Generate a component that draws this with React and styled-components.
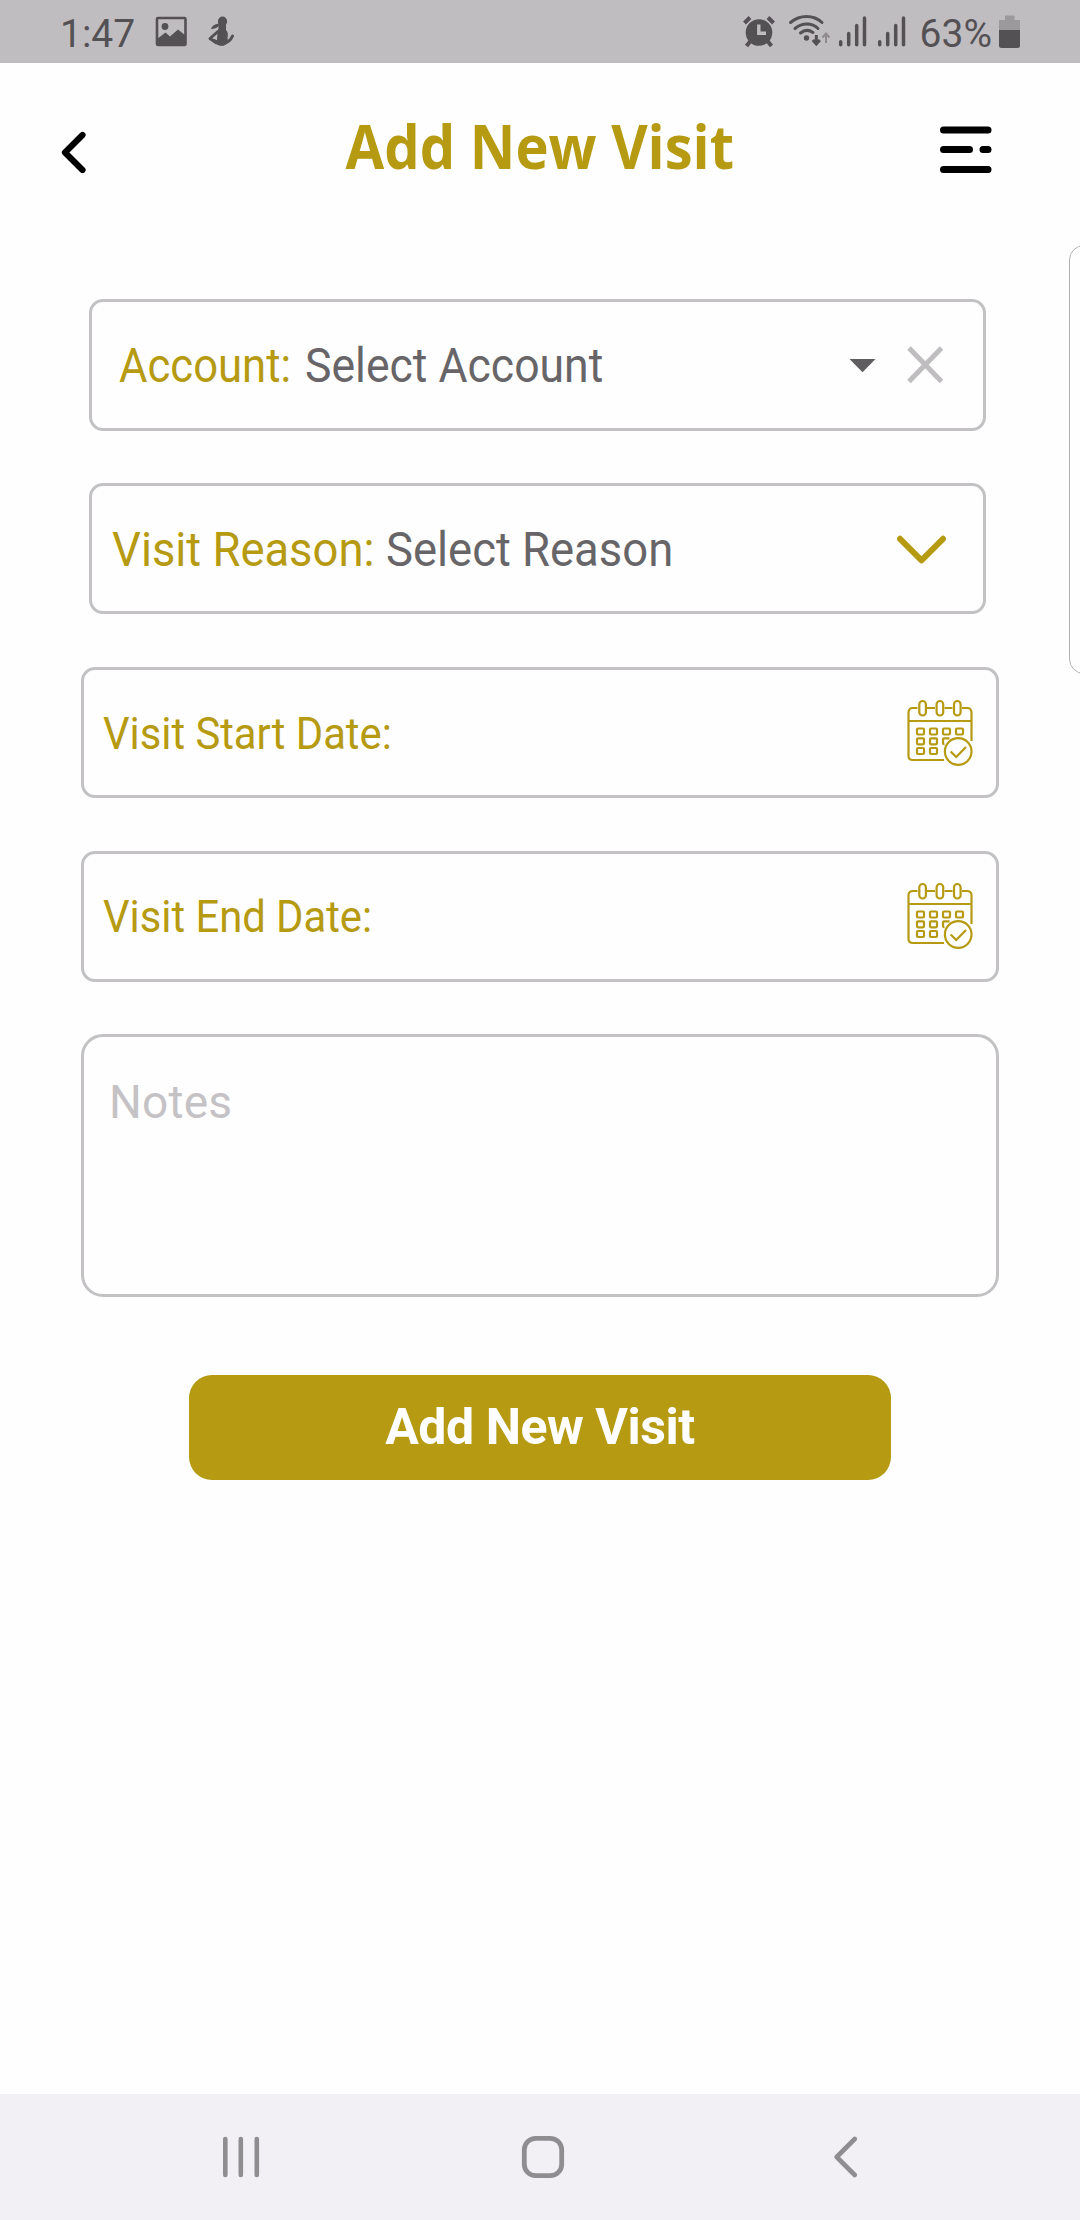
import React from "react";
import styled, { createGlobalStyle, ThemeProvider } from "styled-components";

const theme = {
  gold: "#b59a12",
  border: "#c3c1c4",
  value: "#676568",
  status: "#545155",
  nav: "#8f8d90",
};

/*
 * Styles
 */

const GlobalStyle = createGlobalStyle`
  * {
    box-sizing: border-box;
  }
  body {
    margin: 0;
    background: #fefefe;
    font-family: Roboto, "Open Sans", sans-serif;
  }
  svg {
    display: block;
    flex-shrink: 0;
  }
`;

const Screen = styled.div`
  position: relative;
  display: flex;
  flex-direction: column;
  width: 1080px;
  height: 2220px;
  overflow: hidden;
  background: #fefefe;
`;

const StatusBar = styled.div`
  display: flex;
  justify-content: space-between;
  height: 63px;
  padding: 0 59px 0 60px;
  background: #c0bdc0;
  color: ${({ theme }) => theme.status};
`;

const StatusGroup = styled.div`
  display: flex;
  align-items: flex-start;
`;

const StatusGap = styled.span`
  width: 11px;
`;

const SignalGroup = styled.span`
  display: flex;
  margin: 0 4px 0 7px;
`;

const StatusText = styled.span`
  font-size: 39px;
  line-height: 68px;
  white-space: nowrap;
  margin-right: ${({ $gap }) => $gap}px;
`;

const Header = styled.header`
  display: flex;
  justify-content: space-between;
  align-items: flex-start;
  height: 236px;
  padding: 50px 86px 0 59px;
`;

const Title = styled.h1`
  margin: 0 0 0 52px;
  color: ${({ theme }) => theme.gold};
  font-family: "Open Sans", sans-serif;
  font-size: 60px;
  font-weight: 700;
  line-height: 67px;
  transform: scaleX(0.935);
`;

const IconButton = styled.button`
  display: flex;
  padding: 0;
  border: 0;
  background: none;
  color: #000000;
  margin-top: ${({ $top }) => $top || 0}px;
`;

const Form = styled.form`
  display: flex;
  flex: 1;
  flex-direction: column;
  gap: 52.5px;
  padding: 0.4px 81px 0;
`;

const Field = styled.div`
  display: flex;
  align-items: center;
  height: 131.25px;
  border: 3px solid ${({ theme }) => theme.border};
  border-radius: 14px;
`;

const SelectField = styled(Field)`
  margin: 0 13px 0 8px;
  padding-left: ${({ $inset }) => $inset}px;
`;

const DateField = styled(Field)`
  padding: 0 22px 0 19px;
`;

// condensed lettering, narrowed from the left edge
const Label = styled.span`
  color: ${({ theme }) => theme.gold};
  font-size: ${({ $size }) => $size || 48}px;
  line-height: 60px;
  padding-top: 2px;
  transform: scaleX(${({ $narrow }) => $narrow});
  transform-origin: left center;
  white-space: nowrap;
`;

const Value = styled(Label)`
  flex: 1;
  margin-left: ${({ $gap }) => $gap}px;
  color: ${({ theme }) => theme.value};
`;

const DateLabel = styled(Label)`
  flex: 1;
`;

const Notes = styled.textarea`
  height: 263px;
  padding: 35px 25px;
  border: 3px solid ${({ theme }) => theme.border};
  border-radius: 22px;
  background: none;
  font-family: inherit;
  font-size: 46px;
  line-height: 60px;
  letter-spacing: 0.2px;
  resize: none;
  outline: none;
  &::placeholder {
    color: #c4c2c5;
    opacity: 1;
  }
`;

const SubmitButton = styled.button`
  align-self: center;
  width: 702px;
  height: 105px;
  margin-top: 25.5px;
  padding: 0 0 2px;
  border: 0;
  border-radius: 23px;
  background: ${({ theme }) => theme.gold};
  color: #ffffff;
  font-family: inherit;
  font-size: 50px;
  font-weight: 700;
  letter-spacing: -0.45px;
`;

const NextPanel = styled.div`
  position: absolute;
  top: 245px;
  left: 1069px;
  width: 300px;
  height: 429px;
  border: 1px solid #b3b1b4;
  border-radius: 15px;
`;

const NavBar = styled.nav`
  display: flex;
  justify-content: space-between;
  align-items: center;
  height: 126px;
  padding: 0 221px;
  background: #f2f0f4;
  color: ${({ theme }) => theme.nav};
`;

/*
 * Icons
 */

const ImageIcon = () => (
  <svg width="54" height="63" viewBox="152 0 54 63">
    <rect x="157" y="18" width="28.5" height="27" rx="1" fill="none" stroke="currentColor" strokeWidth="2.6" />
    <circle cx="165" cy="26.5" r="3.4" fill="currentColor" />
    <path d="M157 39l8.5-6.5 4.5 4 8-7 7.5 6v9H157z" fill="currentColor" />
  </svg>
);

const FigureIcon = () => (
  <svg width="30" height="63" viewBox="206 0 30 63" fill="currentColor">
    <ellipse cx="222.5" cy="21.5" rx="4.6" ry="5" />
    <path d="M219.5 23.5c-4 .2-7.5 2-8.5 5.5 3 .2 6.5-1.2 8.5-3.5z" />
    <path d="M219 25h7v5c2 1.7 2.3 5 1.5 8 1 2.5-.5 6-3.500 7.500h-5c-1.500-1-2.500-3-2-5l.5-8z" />
    <path d="M218.5 31l-8.5 7.500 6.500 4.500" fill="none" stroke="currentColor" strokeWidth="3" strokeLinejoin="round" />
    <path d="M214.5 40.500c3 4.800 14 5 18-4.500" fill="none" stroke="currentColor" strokeWidth="3" strokeLinecap="round" />
    <path d="M213.5 40.500l12-2 2 4.500c-3 3.700-10.500 4-14-2.500z" />
  </svg>
);

const AlarmIcon = () => (
  <svg width="34" height="63" viewBox="741 0 34 63">
    <circle cx="758" cy="32.5" r="13.3" fill="currentColor" />
    <path d="M743.5 23l5.5-5.5M772.5 23l-5.5-5.5" stroke="currentColor" strokeWidth="4" />
    <path d="M749.5 41l-4 5M766.5 41l4 5" stroke="currentColor" strokeWidth="4" />
    <path d="M757.8 24.5v8.7h7.2" fill="none" stroke="#c0bdc0" strokeWidth="3.4" />
  </svg>
);

const WifiIcon = () => (
  <svg width="44" height="63" viewBox="786 0 44 63" fill="none">
    <g stroke="currentColor" strokeWidth="3" strokeLinecap="round">
      <path d="M789.5 22.5c9.5-8 23-8 31.5 0" />
      <path d="M794 28.5c7-6 17-6 23 0" />
      <path d="M799.5 33c4-3.3 8.5-3.3 12.5-.5" />
    </g>
    <circle cx="805.5" cy="38" r="2.7" fill="currentColor" />
    <path d="M815.3 35v8.5m-3.5-3.5l3.5 4 3.5-4" stroke="currentColor" strokeWidth="3" />
    <path d="M825 43V34m-3.5 3.5l3.5-4 3.5 4" stroke="#8f8c90" strokeWidth="2" />
  </svg>
);

const SignalIcon = () => (
  <svg width="39" height="63" viewBox="837 0 39 63">
    <path
      d="M839.7 41.7v3M847.7 33.5v11.2M855.7 25.5v19.2M863.5 18v26.7"
      stroke="currentColor"
      strokeWidth="3.5"
      strokeLinecap="round"
    />
  </svg>
);

const BatteryIcon = () => (
  <svg width="22" height="63" viewBox="999 0 22 63">
    <path d="M1005 15.5h9.5V20h5.5v10.5h-21V20h6z" fill="#9b999c" />
    <path d="M999 30h21v15.5q0 2.5-2.5 2.5h-16q-2.5 0-2.5-2.5z" fill="currentColor" />
  </svg>
);

const BackIcon = () => (
  <svg width="30" height="46" viewBox="59 130 30 46" fill="none">
    <path d="M82.5 135L65 152.5 82.5 170" stroke="currentColor" strokeWidth="6.2" strokeLinecap="round" strokeLinejoin="round" />
  </svg>
);

const MenuIcon = () => (
  <svg width="55" height="50" viewBox="939 125 55 50">
    <path
      d="M943.5 130h44.5M943.5 149.5h26M983 149.5h5M943.5 169.5h44.5"
      stroke="currentColor"
      strokeWidth="7"
      strokeLinecap="round"
    />
  </svg>
);

const CaretIcon = () => (
  <svg width="58" height="50" viewBox="849 340 58 50">
    <path d="M849.5 359h26l-13 13.3z" fill="#605d61" />
  </svg>
);

const CloseIcon = () => (
  <svg width="76" height="50" viewBox="907 340 76 50">
    <path d="M909 348l32.5 33.5M941.5 348L909 381.5" stroke="#bfbdc0" strokeWidth="5" />
  </svg>
);

const ChevronIcon = () => (
  <svg width="86" height="50" viewBox="897 524 86 50" fill="none">
    <path d="M900 538.8l21.5 21.5 21.5-21.5" stroke="#b59a12" strokeWidth="6" strokeLinecap="round" strokeLinejoin="round" />
  </svg>
);

const CalendarIcon = () => (
  <svg width="68" height="68" viewBox="906 699 68 68" fill="none" stroke="#b59a12" strokeWidth="2.2">
    <path d="M917.5 708H913q-4.5 0-4.5 4.5v43.5q0 4 4.5 4h31" />
    <path d="M927 708h8M944.5 708h8M962 708h5q4.5 0 4.5 4.5V741" />
    <path d="M908.5 721h63" />
    <rect x="919.3" y="701" width="6.6" height="14.5" rx="3.3" />
    <rect x="936.6" y="701" width="6.6" height="14.5" rx="3.3" />
    <rect x="954" y="701" width="6.6" height="14.5" rx="3.3" />
    {[917, 930, 943, 956].map((x) => (
      <rect key={x} x={x} y="728.5" width="7" height="6" rx="1" />
    ))}
    {[917, 930].map((x) => (
      <rect key={x} x={x} y="738.3" width="7" height="6" rx="1" />
    ))}
    {[917, 930].map((x) => (
      <rect key={x} x={x} y="748" width="7" height="6" rx="1" />
    ))}
    <path d="M949.5 738.3H944q-1 0-1 1v4q0 1 1.5 1" />
    <circle cx="958.2" cy="751.5" r="13.3" />
    <path d="M950.7 751.5l5.5 5.5 9.8-10" />
  </svg>
);

const RecentsIcon = () => (
  <svg width="40" height="42" viewBox="221 2136 40 42">
    <path d="M225.3 2139v36M240.8 2139v36M256.8 2139v36" stroke="currentColor" strokeWidth="4.6" strokeLinecap="round" />
  </svg>
);

const HomeIcon = () => (
  <svg width="44" height="44" viewBox="521 2135 44 44" fill="none">
    <rect x="524.3" y="2138.3" width="37.4" height="37.4" rx="11.5" stroke="currentColor" strokeWidth="4.8" />
  </svg>
);

const NavBackIcon = () => (
  <svg width="34" height="42" viewBox="825 2136 34 42" fill="none">
    <path d="M854.7 2139l-18 18 18 18" stroke="currentColor" strokeWidth="4.6" strokeLinecap="round" strokeLinejoin="round" />
  </svg>
);

/*
 * Component
 */

const App = () => (
  <ThemeProvider theme={theme}>
    <GlobalStyle />
    <Screen>
      <StatusBar>
        <StatusGroup>
          <StatusText $gap={17}>1:47</StatusText>
          <ImageIcon />
          <FigureIcon />
        </StatusGroup>
        <StatusGroup>
          <AlarmIcon />
          <StatusGap />
          <WifiIcon />
          <SignalGroup>
            <SignalIcon />
            <SignalIcon />
          </SignalGroup>
          <StatusText $gap={7}>63%</StatusText>
          <BatteryIcon />
        </StatusGroup>
      </StatusBar>

      <Header>
        <IconButton type="button" aria-label="Back" $top={17}>
          <BackIcon />
        </IconButton>
        <Title>Add New Visit</Title>
        <IconButton type="button" aria-label="Menu" $top={12}>
          <MenuIcon />
        </IconButton>
      </Header>

      <Form>
        <SelectField $inset={27}>
          <Label $narrow={0.909}>Account:</Label>
          <Value $gap={-3.5} $narrow={0.928}>Select Account</Value>
          <CaretIcon />
          <CloseIcon />
        </SelectField>
        <SelectField $inset={20}>
          <Label $narrow={0.945}>Visit Reason:</Label>
          <Value $gap={-4} $narrow={0.946}>Select Reason</Value>
          <ChevronIcon />
        </SelectField>
        <DateField>
          <DateLabel $size={44.5} $narrow={0.938}>Visit Start Date:</DateLabel>
          <CalendarIcon />
        </DateField>
        <DateField>
          <DateLabel $size={44.5} $narrow={0.938}>Visit End Date:</DateLabel>
          <CalendarIcon />
        </DateField>
        <Notes placeholder="Notes" />
        <SubmitButton type="button">Add New Visit</SubmitButton>
      </Form>

      <NextPanel />

      <NavBar>
        <RecentsIcon />
        <HomeIcon />
        <NavBackIcon />
      </NavBar>
    </Screen>
  </ThemeProvider>
);

export default App;
